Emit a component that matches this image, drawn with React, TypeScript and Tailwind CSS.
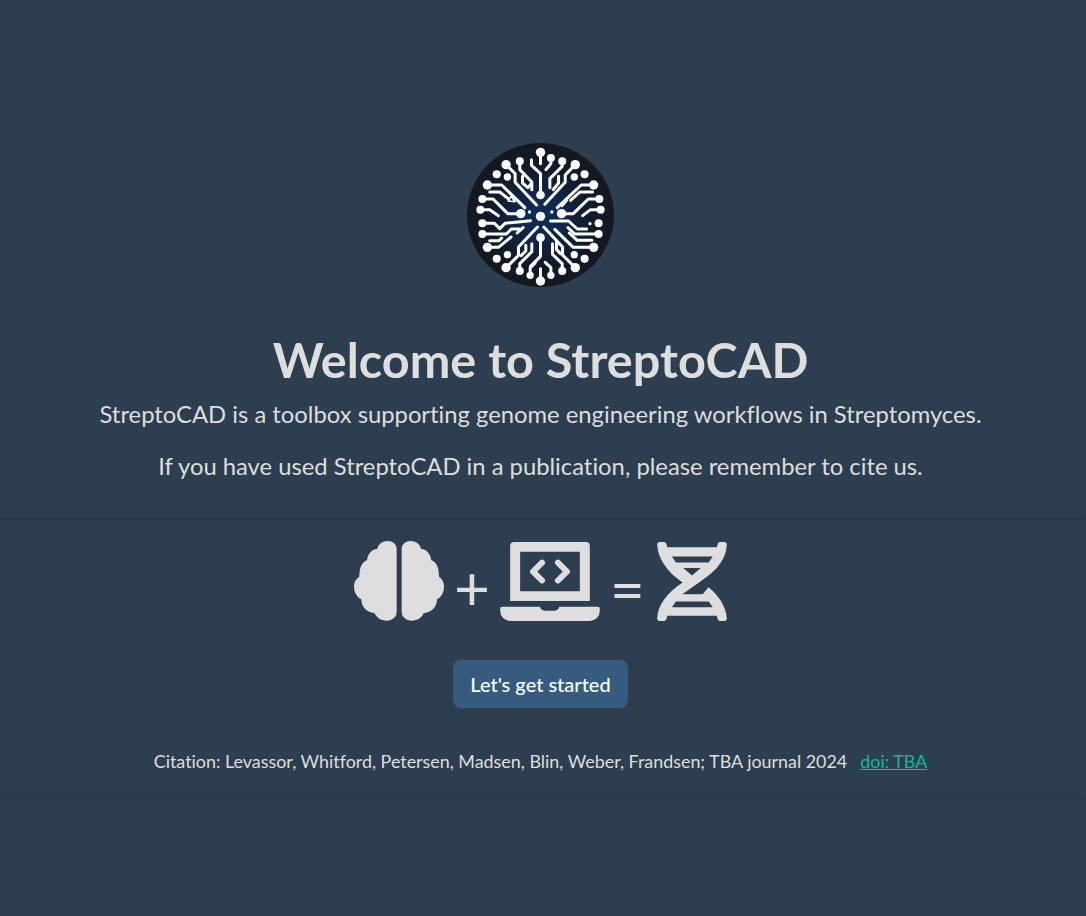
import React from 'react';

const Logo = () => (
  <svg viewBox="82 38 440 432" preserveAspectRatio="none" className="w-[147px] h-[144px] block">
    <defs>
      <radialGradient id="logoBg" cx="50%" cy="50%" r="50%">
        <stop offset="0%" stopColor="#0e2d5a" />
        <stop offset="30%" stopColor="#10264a" />
        <stop offset="68%" stopColor="#111a2b" />
        <stop offset="100%" stopColor="#14171f" />
      </radialGradient>
    </defs>
    <ellipse cx="302" cy="254" rx="220" ry="216" fill="url(#logoBg)" />
    <g fill="none" stroke="#fff" strokeWidth="9" strokeLinejoin="round" strokeLinecap="round">
      {/* top */}
      <path d="M302 66V100" />
      <path d="M333 83V100L318 118" />
      <path d="M275 88V105L302 130V194" />
      <path d="M240 93V118L276 155V178" />
      <path d="M367 93V108L330 145V172" />
      <path d="M248 138V158L264 172L274 160" />
      <path d="M356 138V158L340 178" />
      <path d="M199 103L226 130V156L290 224" />
      <path d="M406 103L376 134V156L315 222" />
      {/* left */}
      <path d="M143 164H186L255 232" />
      <path d="M150 185H180L205 205" />
      <path d="M205 212L214 198L226 214Z" strokeWidth="5" />
      <path d="M128 206H160L204 250H240" />
      <path d="M122 238H150L176 256" />
      <path d="M128 279H164L180 295L196 279L272 271" />
      <path d="M128 311H200L215 296H240" />
      <path d="M232 308L250 292" />
      <path d="M150 331H178L186 323" />
      <path d="M143 351H176L214 320" />
      {/* right */}
      <path d="M461 164H424L352 232" />
      <path d="M458 185H420L392 210" />
      <path d="M380 210L366 226" />
      <path d="M478 206H445L400 250H365" />
      <path d="M482 238H452L428 256" />
      <path d="M332 272H386L412 296H440" />
      <path d="M476 311H405L384 292" />
      <path d="M388 308L412 330H456" />
      <path d="M461 351H400L345 297" />
      {/* bottom */}
      <path d="M302 452V415" />
      <path d="M271 435V413L286 398" />
      <path d="M333 435V412L316 396" />
      <path d="M302 322V378L272 408" />
      <path d="M240 422V400L276 364V340" />
      <path d="M367 422V400L338 372V340" />
      <path d="M199 412L236 375V350L293 290" />
      <path d="M406 412L368 374V350L312 290" />
      <path d="M258 345V362L244 376" />
      <path d="M350 336V358L362 370" />
    </g>
    <g fill="#fff">
      {[
        [302, 66, 14], [333, 83, 12], [240, 93, 12], [367, 93, 12], [199, 103, 14], [406, 103, 14],
        [171, 132, 12], [434, 132, 12], [203, 140, 11], [403, 140, 11],
        [143, 164, 14], [461, 164, 14], [128, 206, 12], [478, 206, 12], [122, 238, 12], [482, 238, 12],
        [128, 279, 12], [476, 279, 12], [128, 311, 12], [476, 311, 12], [143, 351, 14], [461, 351, 14],
        [171, 385, 12], [434, 385, 12], [203, 373, 11], [403, 373, 11],
        [199, 412, 14], [406, 412, 14], [240, 422, 12], [367, 422, 12], [271, 435, 11], [333, 435, 11], [302, 452, 14],
        [302, 194, 13], [302, 322, 13], [302, 258, 14], [243, 250, 14], [365, 250, 14],
        [269, 245, 5], [336, 245, 5], [450, 280, 5],
      ].map(([cx, cy, r]) => (
        <circle key={`${cx}-${cy}`} cx={cx} cy={cy} r={r} />
      ))}
    </g>
  </svg>
);

const BrainIcon = () => (
  <svg viewBox="24 21 270 240" className="w-[90px] h-[80px] block" fill="#dedede">
    <path d="M152 45C152 30 140 21 125 21C110 21 97 30 94 44C78 46 66 58 63 78C48 84 40 100 40 128C28 136 24 148 24 158C24 176 34 190 46 196C46 215 58 235 86 238C92 252 105 260 122 260C140 260 152 248 152 235Z" />
    <path d="M167 45C167 30 179 21 194 21C209 21 222 30 225 44C241 46 253 58 256 78C271 84 279 100 279 128C291 136 294 148 294 158C294 176 285 190 273 196C273 215 261 235 233 238C227 252 214 260 197 260C179 260 167 248 167 235Z" />
  </svg>
);

const LaptopIcon = () => (
  <svg viewBox="480 97 300 238" className="w-[100px] h-[79px] block">
    <path
      fillRule="evenodd"
      fill="#dedede"
      d="M522 97H738A12 12 0 0 1 750 109V275H510V109A12 12 0 0 1 522 97ZM540 126V245H720V126Z"
    />
    <path
      fill="#dedede"
      d="M486 292H600C602 300 608 304 616 304H642C650 304 656 300 658 292H774A6 6 0 0 1 780 298V305A30 30 0 0 1 750 335H510A30 30 0 0 1 480 305V298A6 6 0 0 1 486 292Z"
    />
    <path d="M606 159L579 186L606 213M654 159L681 186L654 213" fill="none" stroke="#dedede" strokeWidth="18" strokeLinejoin="round" strokeLinecap="round" />
  </svg>
);

const DnaIcon = () => (
  <svg viewBox="22 22 208 236" className="w-[70px] h-[79px] block">
    <path
      fillRule="evenodd"
      fill="#dedede"
      d="M22 30Q22 22 30 22H42Q50 22 52 38H200Q203 22 210 22H222Q230 22 230 30C228 70 205 105 148 142L97 178H158L175 157C205 180 228 215 230 250Q230 258 222 258H210Q203 258 200 242H52Q50 258 42 258H30Q22 258 22 250C24 210 50 175 98 143C50 110 24 70 22 30ZM66 65H188L176 83H78ZM100 100H152L126 122ZM78 200H176L188 217H66Z"
    />
  </svg>
);

export default function App() {
  return (
    <div className="min-h-screen bg-[#2c3e50] text-[#dedede] font-['Lato',sans-serif] text-center overflow-hidden pr-[5px] [font-variant-ligatures:none]">
      <div className="flex flex-col items-center pt-[143px] h-[520px]">
        <Logo />
        <h1 className="mt-[42px] text-[48.6px] leading-[60px] font-bold">Welcome to StreptoCAD</h1>
        <p className="mt-[7px] text-[23.8px] leading-[36px]">
          StreptoCAD is a toolbox supporting genome engineering workflows in Streptomyces.
        </p>
        <p className="mt-4 text-[23.8px] leading-[36px]">
          If you have used StreptoCAD in a publication, please remember to cite us.
        </p>
      </div>
      <div className="h-[276px] -mr-[5px] pr-[5px] flex flex-col items-center shadow-[0_0_5px_rgba(0,0,0,0.2)]">
        <div className="flex items-center mt-[21px] h-[80px]">
          <BrainIcon />
          <span className="ml-[10px] pt-[10px] text-[62px] leading-none font-normal">+</span>
          <span className="ml-[10px]"><LaptopIcon /></span>
          <span className="ml-[10px] pt-[14px] text-[60px] leading-none">=</span>
          <span className="ml-[12px]"><DnaIcon /></span>
        </div>
        <button className="mt-[39px] h-[48px] w-[175px] rounded-lg bg-[#375a7f] text-white text-[20px] font-medium">
          Let's get started
        </button>
        <p className="mt-[40px] text-[17.9px] leading-[27px]">
          Citation: Levassor, Whitford, Petersen, Madsen, Blin, Weber, Frandsen; TBA journal 2024
          <a href="#" className="ml-[13px] text-[#10b994] underline">doi: TBA</a>
        </p>
      </div>
    </div>
  );
}
